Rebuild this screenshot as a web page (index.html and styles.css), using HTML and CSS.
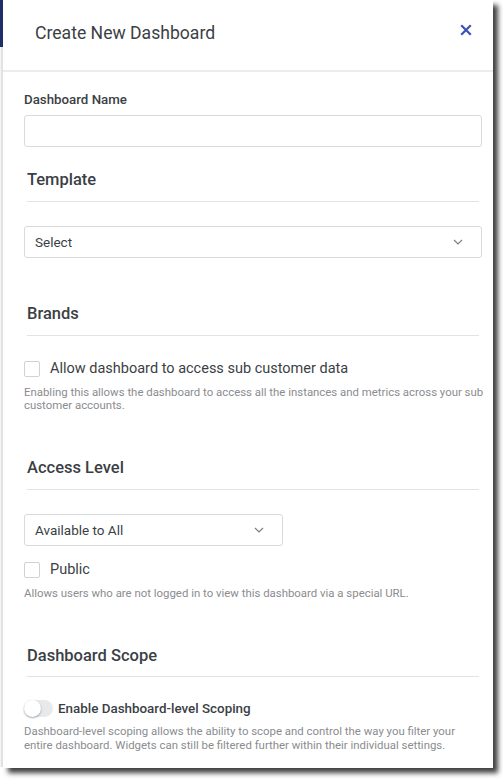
FILE: index.html
```html
<!DOCTYPE html>
<html>
<head>
<meta charset="utf-8">
<link rel="stylesheet" href="styles.css">
</head>
<body>
<div class="frame">
  <div class="strip"><div class="strip-top"></div></div>
  <div class="panel">
    <div class="header">
      <div class="title">Create New Dashboard</div>
      <button class="close" aria-label="Close">
        <svg width="12" height="12" viewBox="0 0 12 12"><path d="M2 2 L10 10 M10 2 L2 10" stroke="#3f51b5" stroke-width="2.2" stroke-linecap="square" fill="none"/></svg>
      </button>
    </div>
    <div class="body">
      <div class="field-label">Dashboard Name</div>
      <div class="input"></div>

      <div class="section-title first">Template</div>
      <div class="select full"><span>Select</span><svg class="chev" width="10" height="6" viewBox="0 0 10 6"><path d="M1 1 L5 5 L9 1" stroke="#7a7f85" stroke-width="1.2" fill="none"/></svg></div>

      <div class="section-title">Brands</div>
      <div class="check-row brands-row"><span class="box"></span><span class="check-label">Allow dashboard to access sub customer data</span></div>
      <div class="help">Enabling this allows the dashboard to access all the instances and metrics across your sub customer accounts.</div>

      <div class="section-title">Access Level</div>
      <div class="select half"><span>Available to All</span><svg class="chev" width="10" height="6" viewBox="0 0 10 6"><path d="M1 1 L5 5 L9 1" stroke="#7a7f85" stroke-width="1.2" fill="none"/></svg></div>
      <div class="check-row public-row"><span class="box"></span><span class="check-label">Public</span></div>
      <div class="help">Allows users who are not logged in to view this dashboard via a special URL.</div>

      <div class="section-title scope-title">Dashboard Scope</div>
      <div class="toggle-row"><span class="toggle"><span class="knob"></span></span><span class="toggle-label">Enable Dashboard-level Scoping</span></div>
      <div class="help scope-help">Dashboard-level scoping allows the ability to scope and control the way you filter your entire dashboard. Widgets can still be filtered further within their individual settings.</div>
    </div>
  </div>
</div>
</body>
</html>
```

FILE: styles.css
```css
* { box-sizing: border-box; }
html, body { margin: 0; padding: 0; background: #ffffff; }
body { font-family: Roboto, "Liberation Sans", sans-serif; color: #3b3f45; }

.frame { display: flex; align-items: flex-start; width: 503px; height: 780px; }

.strip { width: 3px; height: 767px; background: #e4e4e4; border-left: 1px solid #f4f4f4; flex: none; }
.strip-top { height: 47px; background: #1f2d6b; margin-left: -1px; }

.panel {
  width: 490px;
  height: 768px;
  background: #ffffff;
  box-shadow: 5px 5px 5px rgba(0, 0, 0, 0.75);
  flex: none;
}

.header {
  height: 72px;
  border-bottom: 2px solid #ececec;
  display: flex;
  align-items: flex-start;
  justify-content: space-between;
  padding: 21px 21px 0 32px;
}
.title { font-size: 17.6px; line-height: 24px; color: #3b3f45; }
.close { background: none; border: 0; padding: 0; margin-top: 3px; width: 12px; height: 12px; display: flex; cursor: pointer; }

.body { padding: 20px 11px 0 21px; }

.field-label { font-size: 13.3px; font-weight: 500; line-height: 16px; color: #3b3f45; }
.input { margin-top: 7px; height: 32px; border: 1px solid #d9dadd; border-radius: 3px; }

.section-title {
  margin: 46px 3px 0 3px;
  font-size: 16.5px;
  font-weight: 500;
  line-height: 20px;
  padding-bottom: 11px;
  border-bottom: 1px solid #e2e3e6;
  color: #3b3f45;
}
.section-title.first { margin-top: 23px; }
.section-title.scope-title { margin-top: 46px; padding-bottom: 10px; }

.select {
  margin-top: 24px;
  height: 32px;
  border: 1px solid #d9dadd;
  border-radius: 3px;
  display: flex;
  align-items: center;
  justify-content: space-between;
  padding: 0 18px 0 10px;
  font-size: 13.5px;
  color: #3b3f45;
}
.select.half { width: 259px; }
.chev { display: block; }

.check-row { display: flex; align-items: center; height: 16px; }
.brands-row { margin-top: 25px; }
.public-row { margin-top: 16px; }
.box { width: 16px; height: 16px; border: 1px solid #cfd2d6; border-radius: 2px; flex: none; background: #fff; }
.check-label { margin-left: 10px; font-size: 14.5px; color: #3b3f45; line-height: 16px; }

.help { margin-top: 9px; margin-right: -8px; font-size: 11.4px; line-height: 13px; color: #8a8c90; }

.toggle-row { display: flex; align-items: center; margin-top: 22px; height: 18px; }
.toggle { position: relative; width: 29px; height: 17px; border-radius: 9px; background: #e8e9eb; flex: none; }
.knob { position: absolute; left: 0; top: 0; width: 17px; height: 17px; border-radius: 50%; background: #ffffff; box-shadow: 0 1px 2px rgba(0,0,0,0.35); }
.toggle-label { margin-left: 5px; font-size: 13.4px; font-weight: 500; color: #3b3f45; }
.scope-help { margin-top: 7px; margin-right: 0; line-height: 14px; }
```
